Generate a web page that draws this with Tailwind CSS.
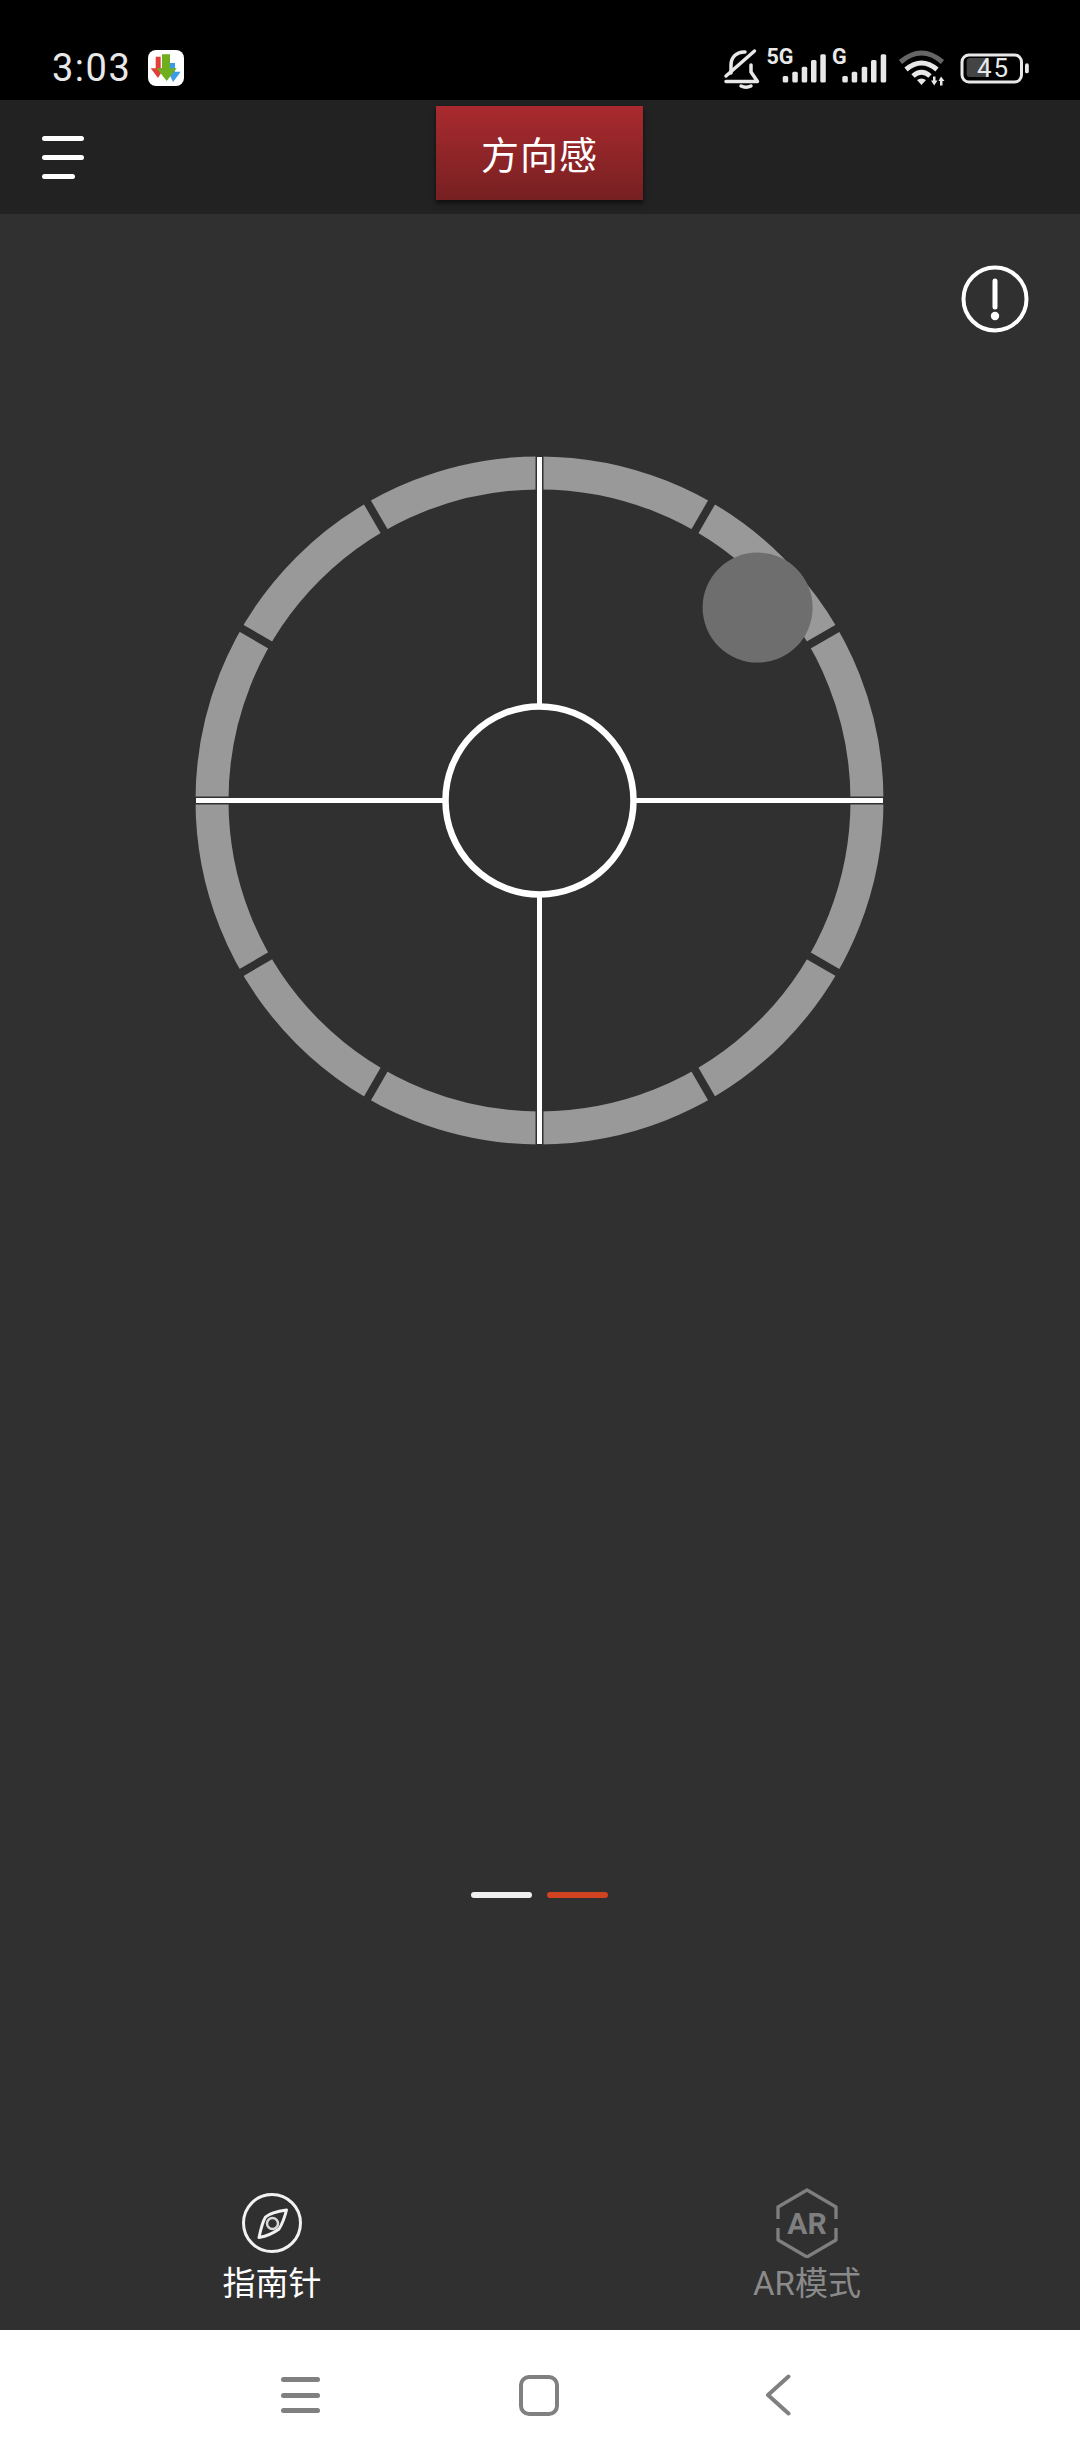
<!DOCTYPE html>
<html lang="zh-CN">
<head>
    <meta charset="UTF-8">
    <meta name="viewport" content="width=device-width, initial-scale=1.0">
    <title>方向感</title>
    <script src="https://cdn.jsdelivr.net/npm/@tailwindcss/browser@4"></script>
</head>
<body class="bg-black font-['Roboto','Noto_Sans_CJK_SC',sans-serif]">
    <div class="flex flex-col w-[1080px] h-[2460px] overflow-hidden">

        <!-- status bar -->
        <div class="flex items-start h-[100px] bg-black shrink-0">
            <span class="ml-[52px] mt-[46px] w-[96px] text-[38px] leading-[44px] tracking-[1.5px] text-[#e8e8e8]">3:03</span>
            <svg class="mt-[50px]" width="36" height="36" viewBox="0 0 36 36">
                <rect width="36" height="36" rx="8" fill="#fff"/>
                <path d="M7.7 6.7H12.7V18.3H16L10 28L2.7 18.3H7.7Z" fill="#e04038"/>
                <path d="M22 13H27V21.7H32.7L25 32L20.3 21.7H22Z" fill="#3a9ce8"/>
                <path d="M14 4.3H22V18.3H28.7L18.7 31L8.7 18.3H14Z" fill="#6fae1e"/>
            </svg>
            <svg class="ml-auto mt-[40px] mr-[45px]" width="320" height="55" viewBox="715 40 320 55">
                <!-- muted bell -->
                <g fill="none" stroke="#e8e8e8" stroke-width="3.5" stroke-linecap="round" stroke-linejoin="round">
                    <path d="M726 81.5H757.5L751 72V65"/>
                    <path d="M731 73V65C731 57 737 51.5 745 52"/>
                    <path d="M726 76L754.5 51"/>
                    <path d="M741 86C744 87.5 748 87.5 751 86"/>
                </g>
                <text x="766.5" y="64" font-size="21.5" font-weight="700" fill="#e8e8e8">5G</text>
                <text x="832" y="64" font-size="21.5" font-weight="700" fill="#e8e8e8">G</text>
                <g fill="#e8e8e8">
                    <rect x="782.7" y="76" width="5.5" height="6.5" rx="1.5"/>
                    <rect x="792.3" y="71.7" width="5.5" height="10.8" rx="1.5"/>
                    <rect x="801.7" y="66.7" width="5.5" height="15.8" rx="1.5"/>
                    <rect x="811" y="60" width="5.5" height="22.5" rx="1.5"/>
                    <rect x="820.3" y="54.3" width="5.5" height="28.2" rx="1.5"/>
                    <rect x="842.3" y="76" width="5.5" height="6.5" rx="1.5"/>
                    <rect x="851.7" y="71.7" width="5.5" height="10.8" rx="1.5"/>
                    <rect x="861.7" y="66.7" width="5.5" height="15.8" rx="1.5"/>
                    <rect x="871" y="60" width="5.5" height="22.5" rx="1.5"/>
                    <rect x="880.7" y="54.3" width="5.5" height="28.2" rx="1.5"/>
                </g>
                <!-- wifi -->
                <g fill="none" stroke-width="5">
                    <path d="M900.5 62Q921.5 44 942.5 62" stroke="#666"/>
                    <path d="M906 69.5Q921.5 56.5 937 69.5" stroke="#e8e8e8"/>
                    <path d="M913 76Q921.5 68.5 930 76" stroke="#e8e8e8"/>
                </g>
                <path d="M917 80Q921.5 77 926 80L921.5 85Z" fill="#e8e8e8"/>
                <path d="M931 80.5H933V76.5H935.5V80.5H937.5L934.2 85.5Z M938.5 81H940V85.5H942.5V81H944.5L941 76.5Z" fill="#e8e8e8"/>
                <!-- battery -->
                <rect x="966.7" y="58" width="22" height="19" rx="3" fill="#444"/>
                <rect x="962" y="55" width="59.5" height="27" rx="7" fill="none" stroke="#e8e8e8" stroke-width="3"/>
                <rect x="1025" y="63.3" width="3.8" height="10" rx="1.9" fill="#e8e8e8"/>
                <text x="977" y="76.7" font-size="26" letter-spacing="2" fill="#e8e8e8">45</text>
            </svg>
        </div>

        <!-- title bar -->
        <div class="flex items-start h-[114px] pt-[6px] bg-[#222222] shrink-0">
            <div class="flex flex-col gap-[14px] ml-[42px] mt-[30px] w-[42px]">
                <div class="h-[5px] rounded-full bg-white"></div>
                <div class="h-[5px] rounded-full bg-white"></div>
                <div class="h-[5px] w-[33px] rounded-full bg-white"></div>
            </div>
            <div class="flex items-center justify-center ml-[352px] w-[207px] h-[94px] pt-[6px] bg-gradient-to-b from-[#a92a2e] to-[#772022] shadow-[0_3px_5px_rgba(0,0,0,0.6)] text-white text-[38px] tracking-[1px]">方向感</div>
        </div>

        <!-- main -->
        <div class="flex flex-col flex-1 bg-[#303030]">
            <div class="flex justify-end pt-[50px] pr-[50px]">
                <svg width="70" height="70" viewBox="0 0 70 70">
                    <circle cx="35" cy="35" r="31.5" fill="none" stroke="#fff" stroke-width="4"/>
                    <path d="M35 17V43" stroke="#fff" stroke-width="5" stroke-linecap="round"/>
                    <circle cx="35" cy="52" r="4.2" fill="#fff"/>
                </svg>
            </div>

            <svg class="block mt-[106px] ml-[180px]" width="720" height="720" viewBox="0 0 720 720">
                <circle cx="359.5" cy="360.4" r="327.5" fill="none" stroke="#999999" stroke-width="33"/>
                <g stroke="#303030" stroke-width="8">
                    <line x1="359.5" y1="10" x2="359.5" y2="710"/>
                    <line x1="359.5" y1="10" x2="359.5" y2="710" transform="rotate(30 359.5 360.4)"/>
                    <line x1="359.5" y1="10" x2="359.5" y2="710" transform="rotate(60 359.5 360.4)"/>
                    <line x1="359.5" y1="10" x2="359.5" y2="710" transform="rotate(90 359.5 360.4)"/>
                    <line x1="359.5" y1="10" x2="359.5" y2="710" transform="rotate(120 359.5 360.4)"/>
                    <line x1="359.5" y1="10" x2="359.5" y2="710" transform="rotate(150 359.5 360.4)"/>
                </g>
                <g stroke="#ffffff" stroke-width="5">
                    <line x1="359.5" y1="17" x2="359.5" y2="266"/>
                    <line x1="359.5" y1="455" x2="359.5" y2="704"/>
                    <line x1="16" y1="360.4" x2="265" y2="360.4"/>
                    <line x1="454" y1="360.4" x2="703" y2="360.4"/>
                </g>
                <circle cx="359.5" cy="360.4" r="94" fill="none" stroke="#ffffff" stroke-width="6.5"/>
                <circle cx="577.6" cy="167.6" r="55" fill="#6e6e6e"/>
            </svg>

            <div class="flex justify-center gap-[15px] mt-[732px] pr-px">
                <div class="w-[61px] h-[6px] rounded-full bg-[#f0f0f0]"></div>
                <div class="w-[61px] h-[6px] rounded-full bg-[#d04220]"></div>
            </div>

            <div class="flex mt-auto pb-[26px]">
                <div class="flex flex-col items-center w-[544px]">
                    <svg width="70" height="70" viewBox="0 0 70 70">
                        <circle cx="35" cy="35" r="28.5" fill="none" stroke="#f2f2f2" stroke-width="3"/>
                        <path d="M49.5 22C47 32 44 38 42 41C38 44 30 48 22 49.5C24 40 26 33 28.5 29C33 25 42 23 49.5 22Z" fill="none" stroke="#f2f2f2" stroke-width="3" stroke-linejoin="round"/>
                        <circle cx="35.5" cy="35.5" r="5.5" fill="none" stroke="#d8d8d8" stroke-width="2.5"/>
                    </svg>
                    <span class="mt-[6px] text-[33px] leading-[40px] text-white">指南针</span>
                </div>
                <div class="flex flex-col items-center w-[526px]">
                    <svg width="70" height="70" viewBox="0 0 70 70">
                        <g fill="none" stroke="#7f7f7f" stroke-width="3.3" stroke-linejoin="round">
                            <path d="M6 31V19L35 2L64 19V31"/>
                            <path d="M6 40V52L35 69L64 52V40"/>
                        </g>
                        <text x="35" y="46" text-anchor="middle" font-size="30" font-weight="700" fill="#7f7f7f">AR</text>
                    </svg>
                    <span class="mt-[6px] text-[33px] leading-[40px] text-[#8a8a8a]">AR模式</span>
                </div>
            </div>
        </div>

        <!-- system nav -->
        <div class="flex items-center h-[130px] bg-white shrink-0">
            <div class="flex flex-col gap-[10.5px] ml-[281px] w-[39px]">
                <div class="h-[5px] rounded-full bg-[#808080]"></div>
                <div class="h-[5px] rounded-full bg-[#808080]"></div>
                <div class="h-[5px] rounded-full bg-[#808080]"></div>
            </div>
            <div class="ml-[199px] w-[40px] h-[41px] rounded-[10px] border-[4px] border-[#808080]"></div>
            <svg class="ml-[206px]" width="26" height="42" viewBox="0 0 26 42">
                <path d="M23.5 2.5L3 21L23.5 39.5" fill="none" stroke="#808080" stroke-width="4" stroke-linecap="round" stroke-linejoin="round"/>
            </svg>
        </div>
    </div>
</body>
</html>
